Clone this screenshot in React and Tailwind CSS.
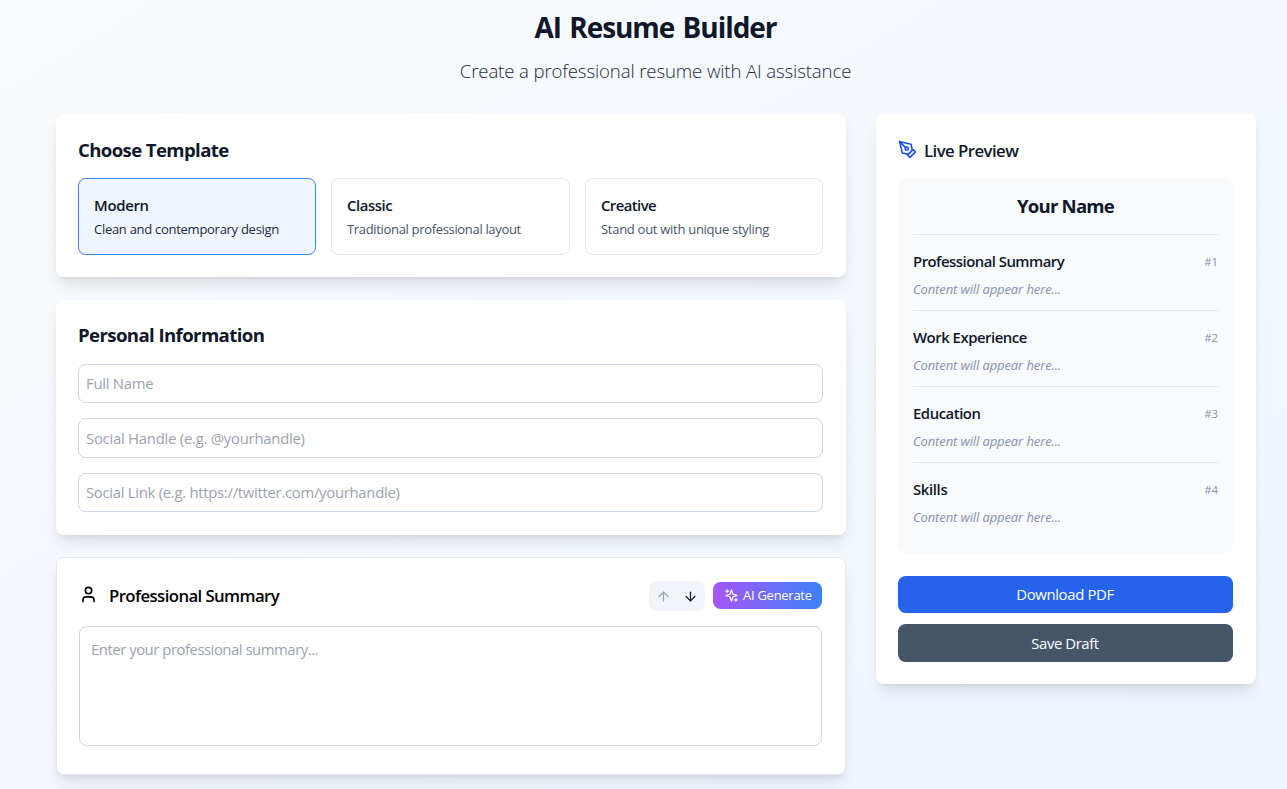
import React from "react";

const cx = (...c) => c.filter(Boolean).join(" ");

function Icon({ className, children }) {
  return (
    <svg
      className={cx("shrink-0", className)}
      viewBox="0 0 24 24"
      fill="none"
      stroke="currentColor"
      strokeWidth="2"
      strokeLinecap="round"
      strokeLinejoin="round"
    >
      {children}
    </svg>
  );
}

const templates = [
  { name: "Modern", text: "Clean and contemporary design", active: true, nameCls: "tracking-[-0.3px]", textCls: "tracking-[-0.28px] text-[#1e293b]" },
  { name: "Classic", text: "Traditional professional layout", nameCls: "tracking-[-0.45px]", textCls: "tracking-[-0.33px] text-[#475569]" },
  { name: "Creative", text: "Stand out with unique styling", nameCls: "tracking-[-0.58px]", textCls: "tracking-[-0.28px] text-[#475569]" },
];

const fields = [
  { placeholder: "Full Name", cls: "h-[39px] pb-[2px] tracking-[-0.28px]" },
  { placeholder: "Social Handle (e.g. @yourhandle)", cls: "h-[40px] tracking-[-0.26px]" },
  { placeholder: "Social Link (e.g. https://twitter.com/yourhandle)", cls: "h-[39px] pb-[2px] tracking-[-0.3px]" },
];

const sections = [
  { title: "Professional Summary", cls: "tracking-[-0.52px]" },
  { title: "Work Experience", cls: "tracking-[-0.48px]" },
  { title: "Education", cls: "tracking-[-0.47px]" },
  { title: "Skills", cls: "tracking-[-0.35px]" },
];

const card = "rounded-[7.6px] bg-white shadow-lg";

export default function App() {
  return (
    <div className="h-[789px] overflow-hidden bg-linear-to-br from-[#f8fafc] to-[#eff6ff] pt-[10px] font-['Open_Sans',sans-serif] text-[#0f172a]">
      <header className="flex w-[1311px] flex-col items-center">
        <h1 className="text-[28px] leading-[34px] font-bold tracking-[-1.05px] [word-spacing:2px]">AI Resume Builder</h1>
        <p className="mt-[13px] text-[18.6px] leading-[28px] font-light tracking-[-0.12px] text-[#1e293b]">
          Create a professional resume with AI assistance
        </p>
      </header>

      <main className="mt-[29px] ml-[56px] flex w-[1200px] items-start justify-between">
        <div className="w-[790px]">
          <section className={cx(card, "h-[163px] pt-[22px] pr-[23px] pl-[22px]")}>
            <h2 className="text-[18.6px] leading-[28px] font-bold tracking-[-0.62px]">Choose Template</h2>
            <div className="mt-[14px] grid grid-cols-[238px_239px_238px] gap-[15px]">
              {templates.map((t) => (
                <button
                  key={t.name}
                  className={cx(
                    "h-[77px] rounded-[7.6px] border px-[15px] text-left",
                    t.active ? "border-[#3b82f6] bg-[#eff6ff]" : "border-[#e2e8f0]"
                  )}
                >
                  <div className={cx("text-[14.9px] leading-[23px] font-semibold whitespace-nowrap", t.nameCls)}>{t.name}</div>
                  <div className={cx("mt-[2px] text-[13px] leading-[20px] whitespace-nowrap", t.textCls)}>{t.text}</div>
                </button>
              ))}
            </div>
          </section>

          <section className={cx(card, "mt-[23px] h-[235px] pt-[22px] pr-[23px] pl-[22px]")}>
            <h2 className="text-[18.6px] leading-[26px] font-bold tracking-[-0.6px]">Personal Information</h2>
            <div className="mt-[16px] flex flex-col gap-[15px]">
              {fields.map((f) => (
                <input
                  key={f.placeholder}
                  placeholder={f.placeholder}
                  className={cx(
                    "w-full rounded-[7.6px] border border-[#cbd5e1] px-[7px] text-[14.9px] placeholder:text-[#9ca3af]",
                    f.cls
                  )}
                />
              ))}
            </div>
          </section>

          <section className={cx(card, "mt-[22px] h-[218px] border border-[#e2e8f0] pt-[23px] pr-[23px] pl-[22px]")}>
            <div className="flex h-[30px] items-center justify-between">
              <div className="flex items-start gap-[11px] text-black">
                <Icon className="mt-[2px] size-[19px]">
                  <path d="M19 21v-2a4 4 0 0 0-4-4H9a4 4 0 0 0-4 4v2" />
                  <circle cx="12" cy="7" r="4" />
                </Icon>
                <h2 className="text-[16.8px] leading-[26px] font-semibold tracking-[-0.6px]">Professional Summary</h2>
              </div>
              <div className="flex items-start gap-[8px]">
                <div className="flex h-[30px] w-[56px] items-center gap-[12px] rounded-[7.6px] bg-[#f1f5f9] pl-[7px]">
                  <Icon className="size-[15px] text-[#94a3b8]">
                    <path d="m5 12 7-7 7 7" />
                    <path d="M12 19V5" />
                  </Icon>
                  <Icon className="size-[15px] text-[#0f172a]">
                    <path d="M12 5v14" />
                    <path d="m19 12-7 7-7-7" />
                  </Icon>
                </div>
                <button className="mt-[1px] flex h-[27px] w-[109px] items-center gap-[4px] rounded-[7.6px] bg-linear-to-r/srgb from-[#a855f7] to-[#3b82f6] pl-[11px] text-[13px] font-medium tracking-[-0.27px] whitespace-nowrap text-white">
                  <Icon className="size-[15px]">
                    <path d="m12 3-1.912 5.813a2 2 0 0 1-1.275 1.275L3 12l5.813 1.912a2 2 0 0 1 1.275 1.275L12 21l1.912-5.813a2 2 0 0 1 1.275-1.275L21 12l-5.813-1.912a2 2 0 0 1-1.275-1.275L12 3Z" />
                    <path d="M5 3v4" />
                    <path d="M19 17v4" />
                    <path d="M3 5h4" />
                    <path d="M17 19h4" />
                  </Icon>
                  AI Generate
                </button>
              </div>
            </div>
            <textarea
              placeholder="Enter your professional summary..."
              className="mt-[15px] block h-[120px] w-full resize-none rounded-[7.6px] border border-[#cbd5e1] px-[11px] py-[11px] text-[14.9px] leading-[23px] tracking-[-0.48px] placeholder:text-[#9ca3af]"
            />
          </section>
        </div>

        <aside className={cx(card, "h-[570px] w-[380px] pt-[22px] pr-[23px] pl-[22px]")}>
          <div className="flex h-[28px] items-start gap-[7px]">
            <Icon className="mt-[4px] size-[19px] text-[#1d4ff0]">
              <path d="m12 19 7-7 3 3-7 7-3-3z" />
              <path d="m18 13-1.500-7.500L2 2l3.500 14.500L13 18l5-5z" />
              <path d="m2 2 7.586 7.586" />
              <circle cx="11" cy="11" r="2" />
            </Icon>
            <h2 className="text-[16.8px] leading-[30px] font-semibold tracking-[-0.56px]">Live Preview</h2>
          </div>

          <div className="mt-[14px] h-[375px] rounded-[7.6px] bg-[#f8fafc] px-[15px] pt-[14px]">
            <h3 className="border-b border-[#e2e8f0] pb-[14px] text-center text-[18.6px] leading-[28px] font-bold tracking-[-0.81px]">
              Your Name
            </h3>
            {sections.map((s, i) => (
              <div key={s.title} className={cx("h-[76px] pt-[15px]", i < 3 && "border-b border-[#e2e8f0]")}>
                <div className="flex items-center justify-between">
                  <h4 className={cx("text-[14.9px] leading-[23px] font-semibold", s.cls)}>{s.title}</h4>
                  <span className="text-[11.4px] leading-[15px] text-[#8493ad]">#{i + 1}</span>
                </div>
                <p className="mt-[6px] text-[13px] leading-[20px] tracking-[-0.11px] text-[#8493ad] italic">
                  Content will appear here...
                </p>
              </div>
            ))}
          </div>

          <div className="mt-[23px] flex flex-col gap-[11px] text-[14.9px] font-medium text-white">
            <button className="h-[37px] rounded-[7.6px] bg-[#2563eb] pr-[1px] tracking-[-0.35px]">Download PDF</button>
            <button className="h-[38px] rounded-[7.6px] bg-[#475569] pr-[1px] tracking-[-0.42px]">Save Draft</button>
          </div>
        </aside>
      </main>
    </div>
  );
}
